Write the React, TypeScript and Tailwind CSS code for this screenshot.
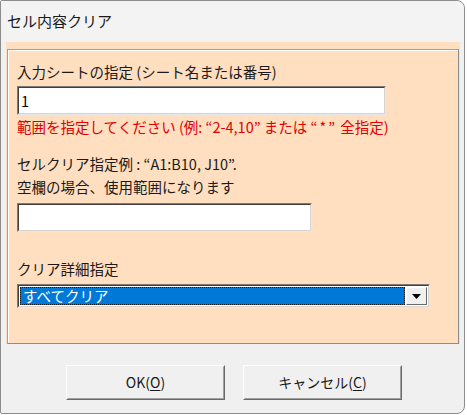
const jp = "font-['Noto_Sans_CJK_JP','Noto_Sans',sans-serif]";

function Sunken({ className, children }: { className: string; children?: React.ReactNode }) {
  return (
    <div className={`border border-t-[#7a7a7a] border-l-[#7a7a7a] border-r-[#e8e8e8] border-b-[#e8e8e8] ${className}`}>
      <div className="h-full w-full border border-t-[#404040] border-l-[#404040] border-r-[#d4d4d4] border-b-[#d4d4d4] bg-white">
        {children}
      </div>
    </div>
  );
}

function Button({ label, mnemonic }: { label: string; mnemonic: string }) {
  return (
    <button className="w-[159px] h-[35px] bg-[#f0f0f0] border border-t-white border-l-white border-r-[#6a6a6a] border-b-[#6a6a6a]">
      <div className="h-full w-full border border-t-[#f0f0f0] border-l-[#f0f0f0] border-r-[#a0a0a0] border-b-[#a0a0a0] flex items-center justify-center text-[14px] text-[#1a1a1a]">
        {label}(<span className="underline underline-offset-2">{mnemonic}</span>)
      </div>
    </button>
  );
}

export default function App() {
  return (
    <div className={`w-[467px] h-[415px] bg-white ${jp}`}>
      <div className="w-[465px] h-[414px] bg-[#f0f0f0] border border-[#8c8c8c] rounded-r-[8px] rounded-l-[2px] flex flex-col">
        <div className="h-[41px] pl-[6px] flex items-center text-[15px] text-[#1a1a1a] bg-[#f3f3f3] rounded-tr-[8px]">
          セル内容クリア
        </div>

        <div className="ml-[5px] w-[454px] h-[302px] bg-[#ffdfc0] pt-[7px] px-[1px]">
          <div className="h-full border border-t-[#a0a0a0] border-l-[#a0a0a0] border-r-[#8c8c8c] border-b-[#8c8c8c]">
            <div className="h-full border border-t-white border-l-white border-r-[#ffdfc0] border-b-[#ffdfc0] pl-[8px] text-[14.5px] leading-[20px] text-[#1a1a1a]">
              <div className="mt-[11px]">入力シートの指定 (シート名または番号)</div>
              <Sunken className="mt-[4px] w-[369px] h-[29px]">
                <div className="pl-[2px] pt-[3px] text-[14.5px] text-black">1</div>
              </Sunken>
              <div className="mt-[2px] text-[#e00000]">
                範囲を指定してください (例: “2-4,10” または <span className="tracking-[2px]">“*”</span> 全指定)
              </div>
              <div className="mt-[17px]">セルクリア指定例 : “A1:B10, J10”.</div>
              <div className="mt-[3px]">空欄の場合、使用範囲になります</div>
              <Sunken className="mt-[6px] w-[295px] h-[29px]" />
              <div className="mt-[27px]">クリア詳細指定</div>
              <Sunken className="mt-[5px] w-[413px] h-[24px]">
                <div className="h-full flex items-stretch p-[1px]">
                  <div className="flex-1 bg-[#0078d7] border border-dotted border-[#1a1a1a] flex items-center pl-[2px] text-white text-[14.5px] leading-none">
                    すべてクリア
                  </div>
                  <div className="w-[21px] ml-[1px] bg-[#f0f0f0] border border-t-white border-l-white border-r-[#6a6a6a] border-b-[#6a6a6a] flex items-center justify-center">
                    <svg width="9" height="5" viewBox="0 0 9 5">
                      <path d="M0 0 L9 0 L4.5 5 Z" fill="#000" />
                    </svg>
                  </div>
                </div>
              </Sunken>
            </div>
          </div>
        </div>

        <div className="mt-[21px] pl-[65px] flex gap-[18px]">
          <Button label="OK" mnemonic="O" />
          <Button label="キャンセル" mnemonic="C" />
        </div>
      </div>
    </div>
  );
}
